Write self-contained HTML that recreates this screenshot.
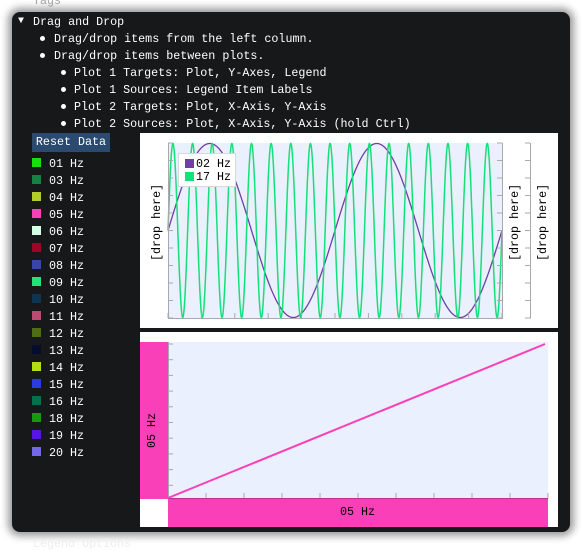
<!DOCTYPE html>
<html><head><meta charset="utf-8"><style>
*{margin:0;padding:0;box-sizing:border-box}
body{width:582px;height:547px;background:#fff;position:relative;overflow:hidden;font-family:"Liberation Mono","DejaVu Sans Mono",monospace;font-size:11.7px;color:#fff}
.win{position:absolute;left:12px;top:12px;width:558px;height:520px;background:#17181a;border-radius:8px;box-shadow:0 0 8px 4px rgba(0,0,0,.4)}
.t{position:absolute;white-space:pre;line-height:14px}
.dot{position:absolute;width:5px;height:5px;border-radius:50%;background:#fff}
.sq{position:absolute;width:9px;height:9px;left:32px}
.lab{position:absolute;left:49px;white-space:pre;line-height:14px}
.btn{position:absolute;left:32px;top:133px;width:78px;height:19px;background:#2a4a70;color:#fff;text-align:center;line-height:19px}
.rot{position:absolute;transform:rotate(-90deg);white-space:pre;color:#000;line-height:14px}
</style></head><body>
<div class="t" style="left:33px;top:-6px;color:#aaa">Tags</div>
<div class="win"></div>
<div class="t" style="left:18px;top:15px;font-size:10px">▼</div>
<div class="t" style="left:33px;top:15px">Drag and Drop</div>
<div class="dot" style="left:40px;top:36px"></div><div class="t" style="left:54px;top:32px">Drag/drop items from the left column.</div>
<div class="dot" style="left:40px;top:53px"></div><div class="t" style="left:54px;top:49px">Drag/drop items between plots.</div>
<div class="dot" style="left:61px;top:70px"></div><div class="t" style="left:74px;top:66px">Plot 1 Targets: Plot, Y-Axes, Legend</div>
<div class="dot" style="left:61px;top:87px"></div><div class="t" style="left:74px;top:83px">Plot 1 Sources: Legend Item Labels</div>
<div class="dot" style="left:61px;top:104px"></div><div class="t" style="left:74px;top:100px">Plot 2 Targets: Plot, X-Axis, Y-Axis</div>
<div class="dot" style="left:61px;top:121px"></div><div class="t" style="left:74px;top:117px">Plot 2 Sources: Plot, X-Axis, Y-Axis (hold Ctrl)</div>
<div class="btn">Reset Data</div>
<div id="list"></div>
<div class="t" style="left:33px;top:537px;color:#eee">Legend Options</div>
<svg style="position:absolute;left:0;top:0" width="582" height="547" id="s"></svg>
<div class="rot" style="left:126px;top:223px;width:62px;height:14px">[drop here]</div>
<div class="rot" style="left:484px;top:223px;width:62px;height:14px">[drop here]</div>
<div class="rot" style="left:512px;top:223px;width:62px;height:14px">[drop here]</div>
<div style="position:absolute;left:178px;top:153px;width:58px;height:34px;background:#fff;border:1px solid #d8d8d8"></div>
<div style="position:absolute;left:185px;top:159px;width:9px;height:9px;background:#6f3fa8"></div>
<div style="position:absolute;left:185px;top:172px;width:9px;height:9px;background:#16e07a"></div>
<div class="t" style="left:196px;top:157px;color:#000">02 Hz</div>
<div class="t" style="left:196px;top:170px;color:#000">17 Hz</div>
<div class="rot" style="left:124px;top:413px;width:56px;height:14px">05 Hz</div>
<div class="t" style="left:340px;top:505px;color:#000">05 Hz</div>
<script>
var items=[["01","#1adf0e"],["03","#158243"],["04","#b3cc2b"],["05","#f940b8"],["06","#d3ffe6"],["07","#9a0728"],["08","#3846a9"],["09","#22e279"],["10","#0d3552"],["11","#b94c70"],["12","#4f6c17"],["13","#060d2c"],["14","#b4e00f"],["15","#2a3ce0"],["16","#05714a"],["18","#159a0c"],["19","#5a14e0"],["20","#7369e8"]];
var h="";items.forEach(function(it,i){var y=163+17*i;h+='<div class="sq" style="top:'+(y-5)+'px;background:'+it[1]+'"></div><div class="lab" style="top:'+(y-6)+'px">'+it[0]+' Hz</div>';});
document.getElementById("list").innerHTML=h;
var s="";
s+='<rect x="140" y="133" width="418" height="195" fill="#fff"/>';
s+='<rect x="168" y="143" width="334" height="175" fill="#eaf0fd"/>';
function wave(f,col,w){var p="";for(var i=0;i<=1200;i++){var x=168+334*i/1200;var y=230.5-87*Math.sin(2*Math.PI*f*i/1200);p+=(i?"L":"M")+x.toFixed(2)+" "+y.toFixed(2);}return '<path d="'+p+'" fill="none" stroke="'+col+'" stroke-width="'+w+'"/>';}
s+=wave(2,"#6f3fa8",1.3);s+=wave(17,"#16e07a",1.5);
s+='<path d="M168.5 143V318.5H502.5V143M530.5 143V318.5" fill="none" stroke="#a8a8b0" stroke-width="1"/>';
for(var i=0;i<=10;i++){var y=143+17.5*i;s+='<path d="M168 '+y+'H173M502 '+y+'H497M530 '+y+'H525" stroke="#aaa"/>';var x=168+33.4*i;s+='<path d="M'+x+' 318V313" stroke="#aaa"/>';}
s+='<rect x="140" y="332" width="418" height="195" fill="#fff"/>';
s+='<rect x="168" y="342" width="380" height="157" fill="#eaf0fd"/>';
s+='<rect x="140" y="342" width="28" height="157" fill="#f940b8"/>';
s+='<rect x="168" y="499" width="380" height="28" fill="#f940b8"/>';
s+='<path d="M168.5 342V499" stroke="#a8a8b0"/>';
s+='<path d="M168 498.5H548" stroke="#c03090"/>';
for(var i=0;i<10;i++){var y=344+15.7*i;s+='<path d="M168 '+y+'H173" stroke="#aaa"/>';}
for(var i=1;i<=10;i++){var x=168+38*i;s+='<path d="M'+x+' 498V493" stroke="#aaa"/>';}
s+='<path d="M168 498L545 344" stroke="#f940b8" stroke-width="2"/>';
document.getElementById("s").innerHTML=s;
</script>
</body></html>
